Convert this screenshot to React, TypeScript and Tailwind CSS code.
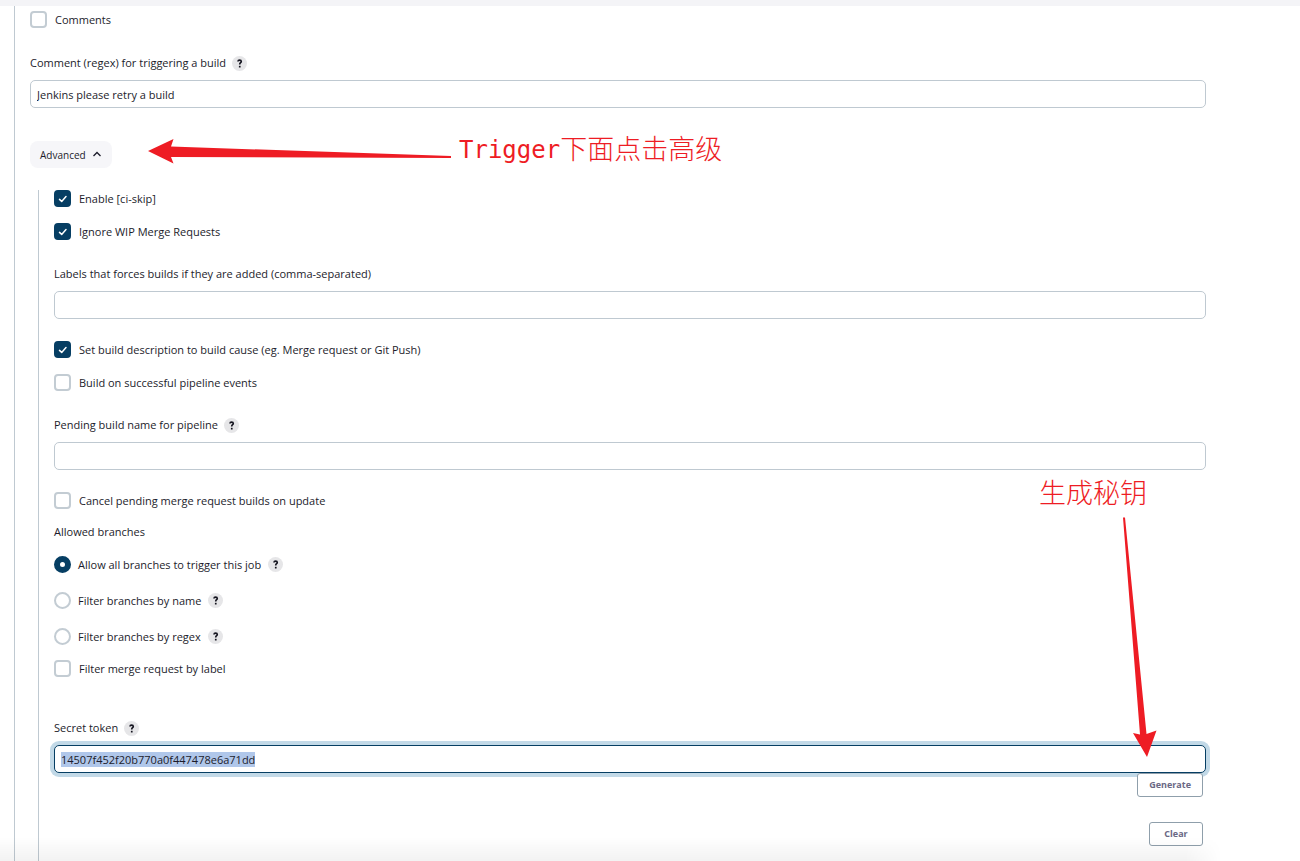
import { useEffect, useRef, type ReactNode } from "react";

function Help({ topic }: { topic: string }) {
  return (
    <button
      type="button"
      aria-label={`Help for ${topic}`}
      className="flex size-[15px] shrink-0 items-center justify-center rounded-full bg-[#e6e6e8] text-[#14141f]"
    >
      <svg viewBox="0 0 15 15" className="size-[15px]" fill="none" stroke="currentColor" aria-hidden="true">
        <path d="M5.9 5.500C6 4.400 6.700 4.100 7.600 4.100c1 0 1.700.5 1.700 1.400 0 1.200-1.600 1.200-1.600 2.900" strokeWidth="1.6" />
        <path d="M6.900 9.800h1.700v1.700H6.900z" fill="currentColor" stroke="none" />
      </svg>
    </button>
  );
}

function Check({ id, label, checked = false }: { id: string; label: string; checked?: boolean }) {
  return (
    <div className="flex h-[17px] items-center gap-2">
      <span className="grid size-[17px] shrink-0">
        <input
          id={id}
          type="checkbox"
          defaultChecked={checked}
          className="peer col-start-1 row-start-1 size-[17px] appearance-none rounded-[4px] border-2 border-[#c3ccd3] bg-white checked:border-[#063e63] checked:bg-[#063e63]"
        />
        <svg
          viewBox="0 0 17 17"
          className="pointer-events-none invisible col-start-1 row-start-1 size-[17px] peer-checked:visible"
          fill="none"
          stroke="white"
          strokeWidth="1.5"
          strokeLinecap="round"
          strokeLinejoin="round"
          aria-hidden="true"
        >
          <path d="M5.500 9.400 7.700 11.400 12 6.600" />
        </svg>
      </span>
      <label htmlFor={id}>{label}</label>
    </div>
  );
}

function Radio({ id, label, checked = false }: { id: string; label: string; checked?: boolean }) {
  return (
    <div className="flex h-[17px] items-center gap-[7px]">
      <input
        id={id}
        type="radio"
        name="branches"
        defaultChecked={checked}
        className="size-[17px] shrink-0 appearance-none rounded-full border-2 border-[#c3ccd3] bg-white checked:border-[6px] checked:border-[#063e63]"
      />
      <label htmlFor={id}>{label}</label>
      <Help topic={label} />
    </div>
  );
}

function Field({ id, label, help = false, children }: { id: string; label: string; help?: boolean; children: ReactNode }) {
  return (
    <div className="flex flex-col gap-2">
      <div className="flex h-[18px] items-center gap-[6px]">
        <label htmlFor={id}>{label}</label>
        {help && <Help topic={label} />}
      </div>
      {children}
    </div>
  );
}

const box = "h-7 w-full rounded-[5px] border border-[#bfc9d1] bg-white px-[6px] outline-none";
const action = "h-6 min-w-[54px] rounded-[3px] border border-[#8f9fab] bg-white px-[11px] text-[9px] font-bold text-[#6a6885]";

export default function App() {
  const token = useRef<HTMLInputElement>(null);
  useEffect(() => {
    token.current?.focus({ preventScroll: true });
    token.current?.select();
  }, []);

  return (
    <div className="relative h-screen overflow-hidden bg-white font-['Open_Sans','Noto_Sans',sans-serif] text-[11px] leading-4 text-[#1c1c2b]">
      <div className="h-[6px] bg-[#f4f4f7]" />
      <main className="ml-[14px] min-h-screen border-l border-[#bfc9d1] pt-[5px] pr-[94px] pl-[15px]">
        <Check id="comments" label="Comments" />
        <div className="mt-[26px]">
          <Field id="regex" label="Comment (regex) for triggering a build" help>
            <input id="regex" type="text" defaultValue="Jenkins please retry a build" className={box} />
          </Field>
        </div>
        <button type="button" className="mt-[33px] flex h-[27px] items-center gap-[6px] rounded-[8px] bg-[#f6f6f9] px-[10px] text-[10px]">
          Advanced
          <svg viewBox="0 0 10 10" className="size-[10px]" fill="none" stroke="currentColor" strokeWidth="1.3" aria-hidden="true">
            <path d="M1.500 6 5 2.500l3.500 3.500" />
          </svg>
        </button>

        <section className="mt-[22px] ml-2 min-h-screen border-l border-[#bfc9d1] pl-[15px]">
          <div className="flex flex-col gap-4">
            <Check id="skip" label="Enable [ci-skip]" checked />
            <Check id="wip" label="Ignore WIP Merge Requests" checked />
          </div>
          <div className="mt-[25px]">
            <Field id="labels" label="Labels that forces builds if they are added (comma-separated)">
              <input id="labels" type="text" className={box} />
            </Field>
          </div>
          <div className="mt-[22px] flex flex-col gap-4">
            <Check id="cause" label="Set build description to build cause (eg. Merge request or Git Push)" checked />
            <Check id="pipeline" label="Build on successful pipeline events" />
          </div>
          <div className="mt-[25px]">
            <Field id="pending" label="Pending build name for pipeline" help>
              <input id="pending" type="text" className={box} />
            </Field>
          </div>
          <div className="mt-[22px]">
            <Check id="cancel" label="Cancel pending merge request builds on update" />
          </div>
          <fieldset className="mt-[15px]">
            <legend className="h-[18px]">Allowed branches</legend>
            <div className="flex flex-col gap-[19px] pt-[14px]">
              <Radio id="all" label="Allow all branches to trigger this job" checked />
              <Radio id="by-name" label="Filter branches by name" />
              <Radio id="by-regex" label="Filter branches by regex" />
            </div>
          </fieldset>
          <div className="mt-[15px]">
            <Check id="by-label" label="Filter merge request by label" />
          </div>
          <div className="mt-[42px]">
            <Field id="token" label="Secret token" help>
              <input
                ref={token}
                id="token"
                type="text"
                defaultValue="14507f452f20b770a0f447478e6a71dd"
                className="h-7 w-full rounded-[5px] border border-[#063e63] bg-white px-[6px] shadow-[0_0_0_4px_#c2d9e7] outline-none selection:bg-[#b0c7ea] selection:text-[#1c1c2b]"
              />
            </Field>
          </div>
          <div className="relative flex flex-col items-end gap-[25px] pr-[3px]">
            <button type="button" className={action}>Generate</button>
            <button type="button" className={action}>Clear</button>
          </div>
        </section>
      </main>

      <div className="pointer-events-none absolute bottom-0 left-0 h-6 w-[94%] bg-linear-to-b from-black/0 to-black/5 mask-r-from-97%" />

      <div className="pointer-events-none absolute top-[130px] left-[148px] flex items-center gap-2 text-[#ee1c24]">
        <svg viewBox="0 0 303 40" className="h-10 w-[303px]" fill="currentColor" aria-hidden="true">
          <path d="M0 21 25.500 9 23 16.500 303 26v2L23 27l2.500 6.500Z" />
        </svg>
        <p className="flex h-10 items-start whitespace-nowrap">
          <span className="font-['DejaVu_Sans_Mono',monospace] text-[24px] leading-10">Trigger</span>
          <span className="font-['Noto_Sans_CJK_SC',sans-serif] text-[27px] leading-9 font-light">下面点击高级</span>
        </p>
      </div>
      <p className="pointer-events-none absolute top-[472px] right-[153px] font-['Noto_Sans_CJK_SC',sans-serif] text-[27px] leading-10 font-light whitespace-nowrap text-[#ee1c24]">
        生成秘钥
      </p>
      <svg viewBox="0 0 60 242" className="pointer-events-none absolute top-[516px] right-[140px] h-[242px] w-[60px] text-[#ee1c24]" fill="currentColor" aria-hidden="true">
        <path d="M23 1.500h2L46.500 218 56.500 214.500 47 241 33 217l7 1.500Z" />
      </svg>
    </div>
  );
}
